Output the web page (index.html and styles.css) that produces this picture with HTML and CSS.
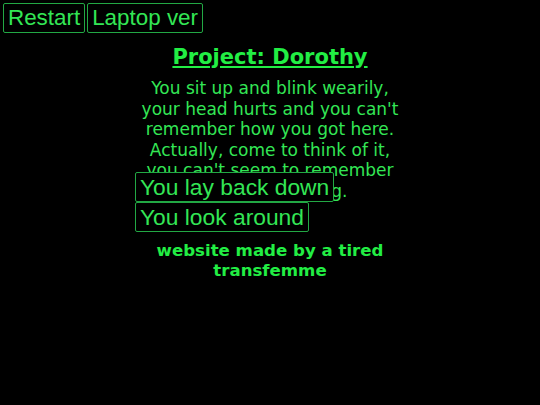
FILE: index.html
```html
<!DOCTYPE html>
<html lang="en">
<head>
<meta charset="utf-8">
<title>Project: Dorothy</title>
<link rel="stylesheet" href="styles.css">
</head>
<body>
<div class="topbar">
  <button class="btn">Restart</button>
  <button class="btn">Laptop ver</button>
</div>
<main class="column">
  <h1 class="title">Project: Dorothy</h1>
  <p class="story">You sit up and blink wearily, your head hurts and you can't remember how you got here. Actually, come to think of it, you can't seem to remember much of anything.</p>
  <div class="choices">
    <button class="btn btn-choice">You lay back down</button>
    <button class="btn btn-choice">You look around</button>
  </div>
  <p class="credit">website made by a tired transfemme</p>
</main>
</body>
</html>
```
FILE: styles.css
```css
html, body {
  margin: 0;
  padding: 0;
  background: #000;
}
body {
  font-family: "DejaVu Sans", Verdana, sans-serif;
  color: #33e655;
  width: 540px;
  height: 405px;
}
.btn {
  font-family: "Liberation Sans", Arial, sans-serif;
  font-size: 22.4px;
  line-height: normal;
  color: #33e655;
  background: #000;
  border: 1px solid #22a844;
  border-radius: 2px;
  padding: 1px 4px;
  margin: 0;
  cursor: pointer;
}
.btn-choice {
  font-size: 22.8px;
  padding: 1px 4px 0;
}
.topbar {
  display: flex;
  gap: 2px;
  padding: 3px 3px 0;
}
.column {
  width: 270px;
  margin: 0 auto;
}
.title {
  font-size: 21px;
  font-weight: bold;
  text-decoration: underline;
  text-align: center;
  color: #22ee44;
  margin: 12px 0 0;
  line-height: normal;
}
.story {
  font-size: 17px;
  line-height: 20.5px;
  text-align: center;
  margin: 9px 0 0;
  height: 94px;
}
.choices {
  display: flex;
  flex-direction: column;
  align-items: flex-start;
}
.credit {
  font-size: 16.6px;
  font-weight: bold;
  line-height: 20px;
  text-align: center;
  color: #22ee44;
  margin: 9px 0 0;
}
```
